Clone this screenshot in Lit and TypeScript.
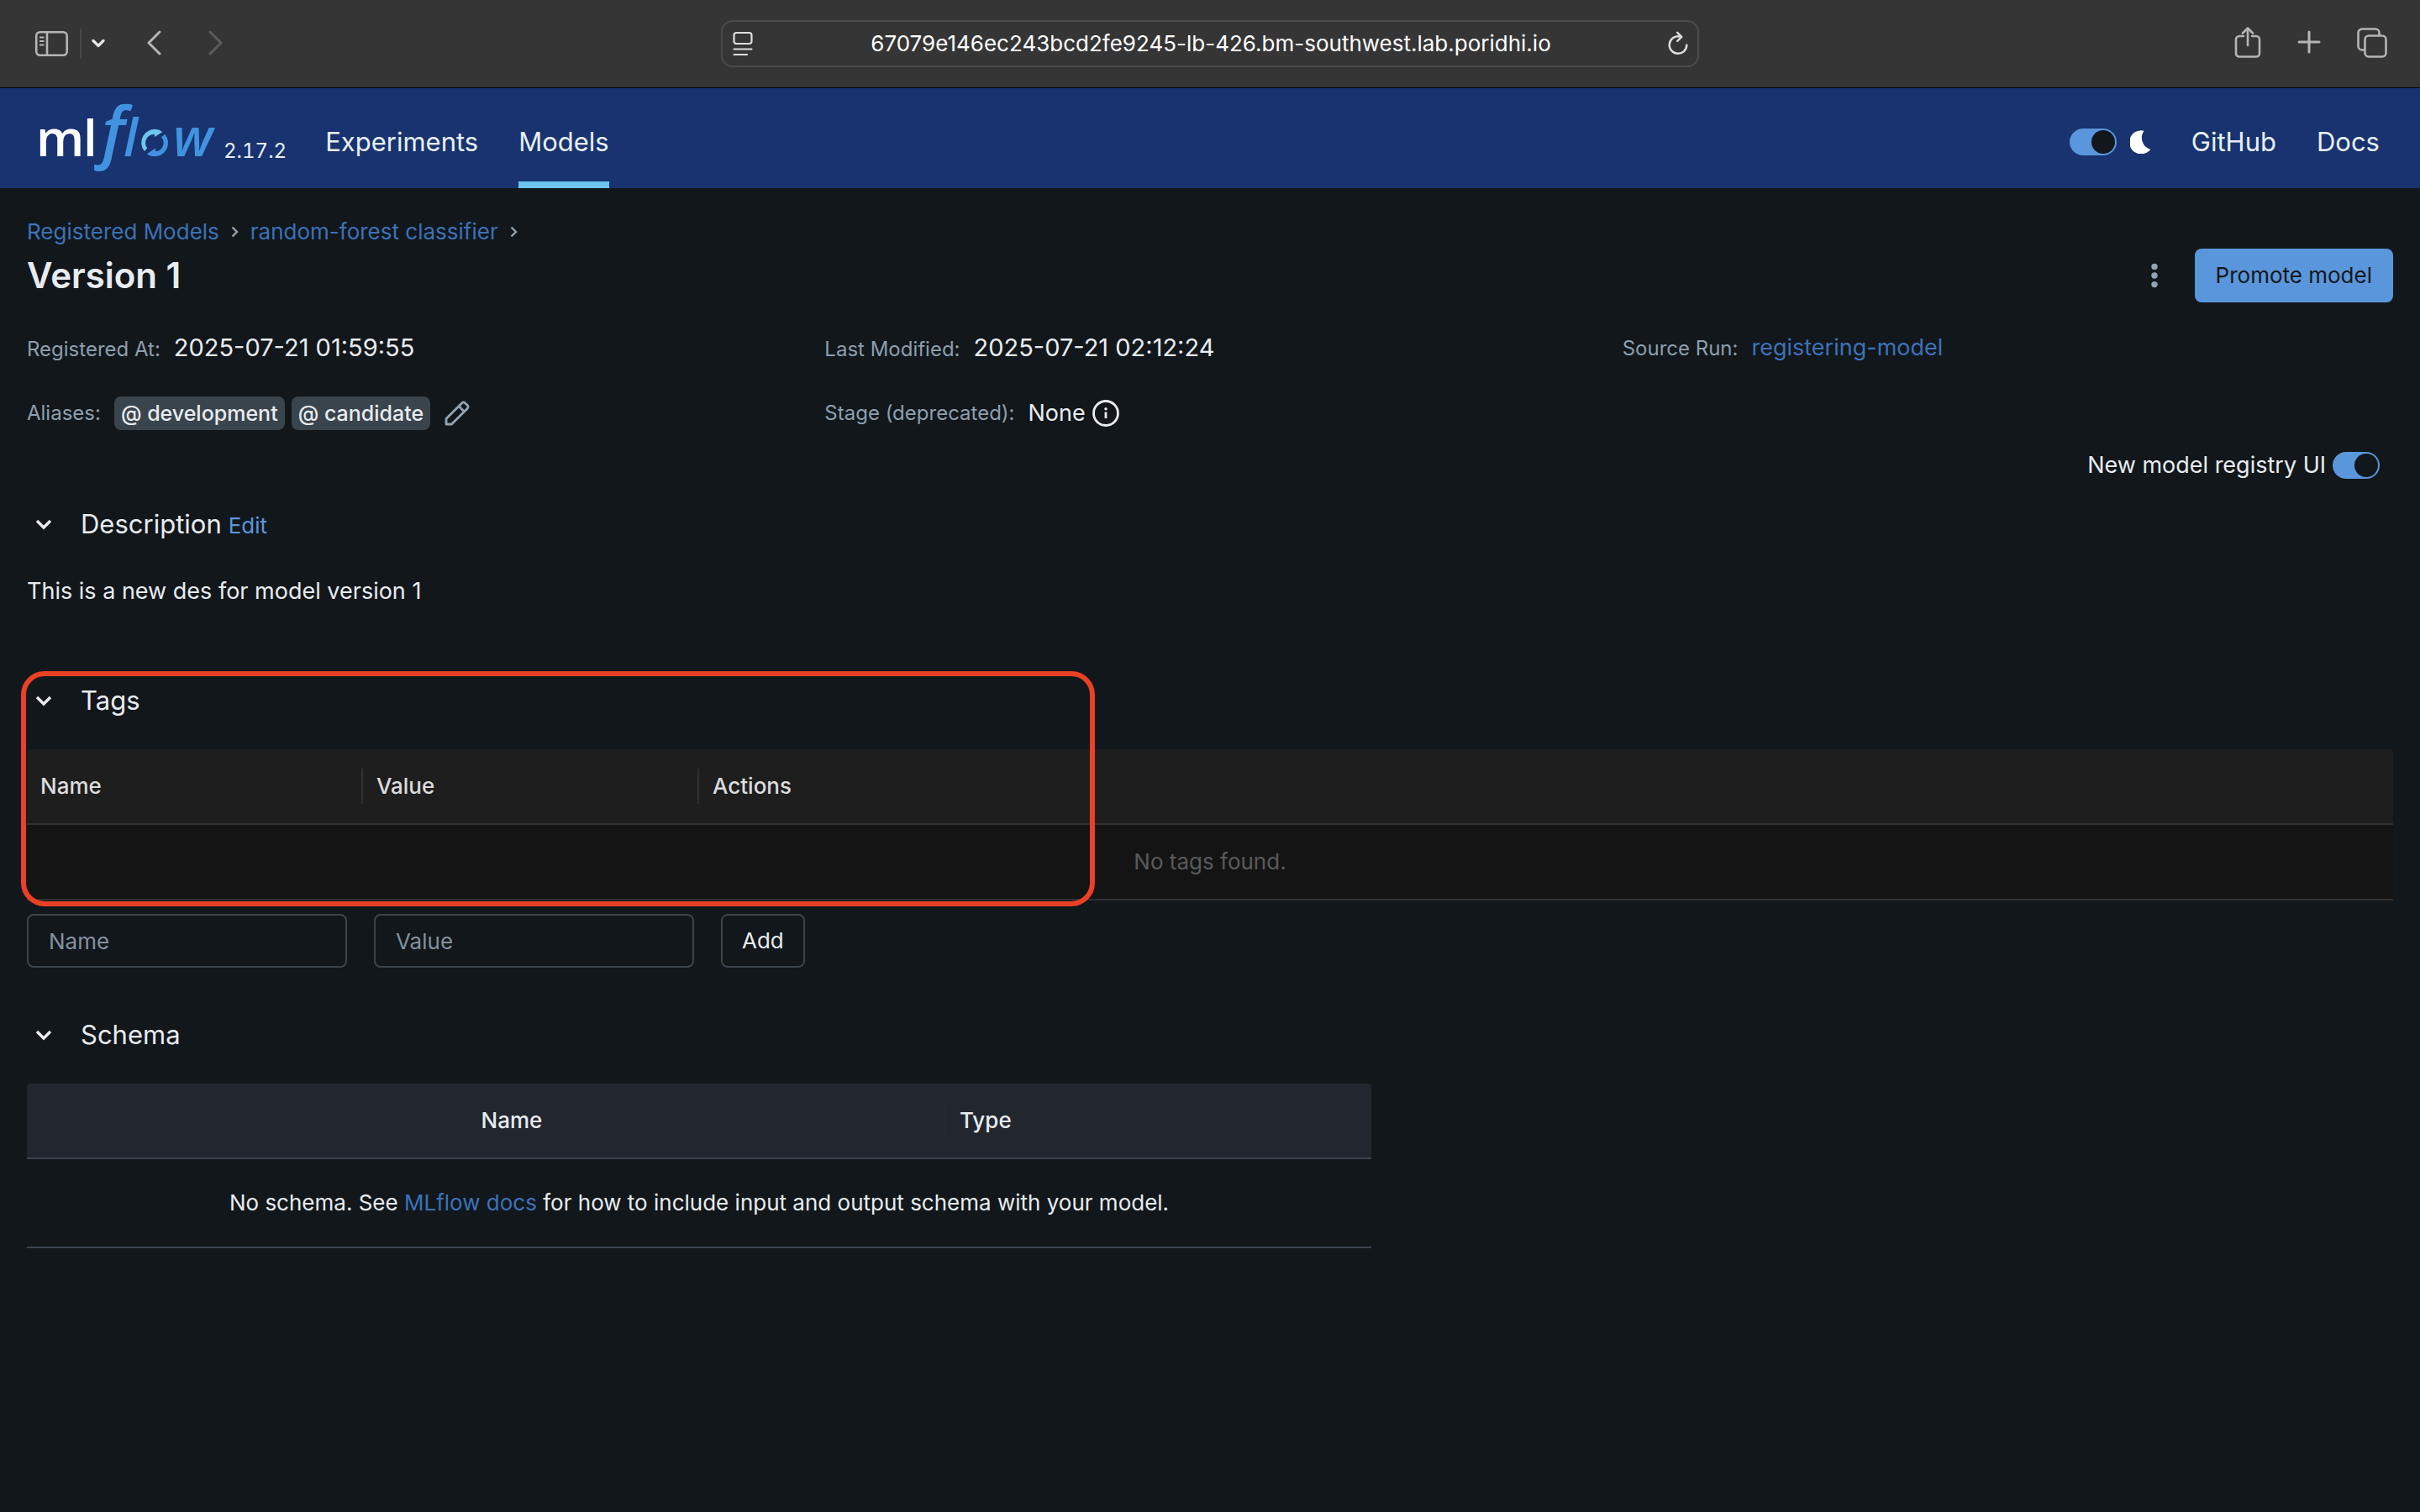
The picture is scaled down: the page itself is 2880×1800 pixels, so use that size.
import { LitElement, html, css, svg } from "lit";
import { customElement, state } from "lit/decorators.js";

const chevronDown = html`<svg class="chev" viewBox="0 0 20 14" aria-hidden="true">
  <path d="M2 3 L10 11 L18 3" fill="none" stroke="currentColor" stroke-width="3.4" />
</svg>`;

const crumbArrow = html`<svg class="crumb-arrow" viewBox="0 0 9 14" aria-hidden="true">
  <path d="M1.5 1.5 L7 7 L1.5 12.5" fill="none" stroke="currentColor" stroke-width="2.4" />
</svg>`;

const flowRing = svg`
  <path fill="#6cc7ea" d="M171.8 180 A16 16 0 0 1 186.5 154 Q190.5 154.600 193.200 157.300 L184 163 L184 160 A10.200 10.200 0 0 0 175.400 176.600 Z" />
  <path fill="#4193e0" d="M196.200 159.700 A16 16 0 0 1 182 186 Q178 185.600 174.800 183.200 L185 176.600 L185 180.200 A10.200 10.200 0 0 0 192 163.200 Z" />`;

@customElement("app-root")
export class AppRoot extends LitElement {
  @state() private darkMode = true;
  @state() private newRegistry = true;

  static styles = css`
    :host {
      display: flex;
      flex-direction: column;
      min-height: 100vh;
      background: #12171b;
      color: #e8ecf0;
      font-family: Inter, "Liberation Sans", sans-serif;
      font-size: 26px;
      line-height: 44px;
    }
    *, *::before { box-sizing: border-box; }
    a { color: #3c72b8; text-decoration: none; }
    button, input { font: inherit; color: inherit; margin: 0; }
    button { background: none; border: 0; padding: 0; cursor: pointer; }
    h1, h2, p, dl, dd { margin: 0; font-weight: 400; }
    svg { display: block; flex: none; }

    /* browser toolbar */
    .toolbar {
      display: grid;
      grid-template-columns: 1fr minmax(0, 1164px) 1fr;
      align-items: center;
      height: 105px;
      padding: 0 38px;
      background: #353535;
      border-bottom: 1px solid #000;
      color: #b5b5b5;
    }
    .tools { display: flex; align-items: center; }
    .tools.end { justify-content: flex-end; gap: 40px; }
    .sep { width: 2px; height: 36px; background: #484848; margin: 0 12px; }
    .history { display: flex; gap: 50px; margin-left: 48px; }
    .white { color: #e6e6e6; }
    .dim { color: #5c5c5c; }
    .address {
      display: flex;
      align-items: center;
      height: 56px;
      padding: 0 10px;
      border: 2px solid #4b4b4b;
      border-radius: 14px;
      color: #dedede;
    }
    .url {
      flex: 1;
      min-width: 0;
      border: 0;
      outline: 0;
      background: none;
      color: #fff;
      text-align: center;
    }

    /* application header */
    .header {
      display: flex;
      height: 119px;
      padding: 8px 48px 0 44px;
      background: #18336f;
      font-size: 31px;
    }
    .header a { color: #e8f0fb; }
    .header nav { display: flex; gap: 48px; }
    .header nav a { display: flex; align-items: center; }
    .header nav a.active { box-shadow: inset 0 -8px #6cc5ea; }
    .brand { display: flex; align-items: flex-end; gap: 8px; margin-right: 46px; padding-bottom: 16px; }
    .logo { overflow: visible; }
    .version {
      font-size: 24px;
      line-height: 28px;
      padding-bottom: 14px;
      font-variant-numeric: tabular-nums;
    }
    .theme { display: flex; align-items: center; gap: 16px; margin: 0 48px 0 auto; }

    .switch {
      appearance: none;
      display: flex;
      justify-content: flex-start;
      width: 56px;
      height: 32px;
      padding: 2px;
      border-radius: 16px;
      background: #5f6f7d;
      cursor: pointer;
    }
    .switch::before {
      content: "";
      width: 28px;
      height: 28px;
      border-radius: 50%;
      background: #12171b;
    }
    .switch:checked { justify-content: flex-end; background: #5a96db; }

    /* page */
    main { padding: 32px; }
    .crumbs { display: flex; align-items: center; gap: 14px; line-height: 40px; }
    .crumb-arrow { width: 9px; height: 14px; color: #92a4b3; }
    .title-row { display: flex; align-items: center; justify-content: space-between; height: 64px; }
    h1 { font-size: 42px; font-weight: 600; }
    .actions { display: flex; align-items: center; gap: 32px; }
    .menu { padding: 8px 12px; color: #92a4b3; }
    .primary {
      height: 64px;
      padding: 0 25px;
      border-radius: 8px;
      background: #5a96db;
      color: #12171b;
    }
    .meta {
      display: grid;
      grid-template-columns: repeat(3, minmax(0, 1fr));
      gap: 34px 32px;
      margin-top: 32px;
    }
    .meta div { display: flex; align-items: baseline; gap: 16px; height: 44px; }
    .meta .centered { align-items: center; }
    .meta dt { font-size: 24px; color: #8d9fae; }
    .meta dd { display: flex; align-items: center; gap: 8px; font-size: 27px; }
    .meta .time { font-size: 29px; }
    .alias {
      height: 40px;
      padding: 0 8px;
      border-radius: 8px;
      background: #3a444d;
      font-size: 25px;
      font-weight: 500;
      line-height: 40px;
    }
    .pencil { color: #92a4b3; margin-left: 8px; }
    .registry {
      display: flex;
      align-items: center;
      justify-content: flex-end;
      gap: 8px;
      height: 32px;
      margin-top: 24px;
      padding-right: 16px;
      font-size: 27px;
    }
    .heading { display: flex; align-items: center; margin-bottom: 36px; }
    .heading h2 { font-size: 31px; }
    .toggle { padding: 0 34px 0 10px; }
    .chev { width: 20px; height: 14px; }
    .edit { margin-left: 8px; padding-top: 4px; color: #5a96db; line-height: 40px; }
    .description { margin-top: 32px; }
    .description p { font-size: 27px; padding-bottom: 28px; }
    .tags, .schema { position: relative; margin-top: 58px; }

    table { width: 100%; border-collapse: separate; border-spacing: 0; table-layout: fixed; }
    th { height: 90px; padding: 0 16px; font-weight: 500; }
    .tag-table th {
      text-align: left;
      color: #dcdcdc;
      border-bottom: 2px solid #303030;
      background: #1e1e1e;
    }
    .tag-table th:not(:last-child) {
      background: linear-gradient(#303030, #303030) right center / 2px 42px no-repeat #1e1e1e;
    }
    .tag-table th:first-child, .schema-table th:first-child { border-top-left-radius: 4px; }
    .tag-table th:last-child, .schema-table th:last-child { border-top-right-radius: 4px; }
    .tag-table td {
      height: 90px;
      padding: 0;
      text-align: center;
      color: #5a5a5a;
      background: #141414;
      border-bottom: 2px solid #303030;
    }
    .col-tag { width: 400px; }
    .new-tag { display: flex; gap: 32px; margin-top: 16px; }
    .field, .add {
      height: 64px;
      padding: 0 24px;
      border: 2px solid #3a444d;
      border-radius: 8px;
      background: none;
    }
    .field { width: 381px; outline: 0; }
    .field::placeholder { color: #83919f; opacity: 1; }
    .add { padding: 0 23px; }
    .callout {
      position: absolute;
      left: -7px;
      top: -13px;
      width: 1278px;
      height: 280px;
      border: 6px solid #ea4025;
      border-radius: 28px;
      pointer-events: none;
    }

    .schema-table { max-width: 1600px; }
    .schema-table th {
      background: #22262e;
      border-bottom: 2px solid #3a444d;
    }
    .schema-table .name {
      padding-left: 76px;
      background: linear-gradient(#262b30, #262b30) right center / 2px 42px no-repeat #22262e;
    }
    .schema-table .type { text-align: left; }
    .schema-table td { height: 106px; padding: 0; text-align: center; border-bottom: 2px solid #3a444d; }
    .col-type { width: 506px; }
  `;

  private heading(title: string, extra: unknown = "") {
    return html`<div class="heading">
      <button class="toggle" aria-expanded="true" aria-label=${title}>${chevronDown}</button>
      <h2>${title}</h2>
      ${extra}
    </div>`;
  }

  private renderToolbar() {
    return html`<div class="toolbar">
      <div class="tools">
        <button aria-label="Sidebar">
          <svg width="45" height="34" viewBox="-2 0 45 34" fill="none" stroke="currentColor">
            <rect x="3.200" y="3.200" width="36.500" height="27.600" rx="4.500" stroke-width="2.600" />
            <path d="M16 3 V31" stroke-width="2.600" />
            <path d="M7 9.500 H12.500 M7 14 H12.500 M7 18.500 H12.500" stroke-width="2" />
          </svg>
        </button>
        <span class="sep"></span>
        <button class="white" aria-label="Tab groups">
          <svg width="16" height="12" viewBox="0 0 16 12">
            <path d="M2 2.500 L8 8.500 L14 2.500" fill="none" stroke="currentColor" stroke-width="3.200" stroke-linecap="round" stroke-linejoin="round" />
          </svg>
        </button>
        <div class="history">
          <button aria-label="Back">
            <svg width="22" height="32" viewBox="0 1 22 32">
              <path d="M17 3 L4 16 L17 29" fill="none" stroke="currentColor" stroke-width="3" stroke-linecap="round" stroke-linejoin="round" />
            </svg>
          </button>
          <button class="dim" aria-label="Forward">
            <svg width="22" height="32" viewBox="0 1 22 32">
              <path d="M5 3 L18 16 L5 29" fill="none" stroke="currentColor" stroke-width="3" stroke-linecap="round" stroke-linejoin="round" />
            </svg>
          </button>
        </div>
      </div>
      <div class="address">
        <button aria-label="Page settings">
          <svg width="28" height="30" viewBox="0 0 28 30" fill="none" stroke="currentColor" stroke-width="2.200" stroke-linecap="round">
            <rect x="3.500" y="2" width="21" height="13" rx="3" />
            <path d="M3.500 21.500 H24.500 M3.500 28 H19" />
          </svg>
        </button>
        <input class="url" aria-label="Address" value="67079e146ec243bcd2fe9245-lb-426.bm-southwest.lab.poridhi.io" />
        <button aria-label="Reload">
          <svg width="26" height="30" viewBox="0 0 26 30" fill="none" stroke="currentColor" stroke-width="2.400" stroke-linecap="round" stroke-linejoin="round">
            <path d="M15.800 6.600 A10.300 10.300 0 1 0 23.300 16.400" />
            <path d="M12.200 1.800 L17.300 6.800 L12.200 11.800" />
          </svg>
        </button>
      </div>
      <div class="tools end">
        <button aria-label="Share">
          <svg width="34" height="40" viewBox="0 2 34 40" fill="none" stroke="currentColor" stroke-width="2.600" stroke-linecap="round" stroke-linejoin="round">
            <path d="M12 13 H7 a4 4 0 0 0 -4 4 V33.500 a4 4 0 0 0 4 4 H27 a4 4 0 0 0 4 -4 V17 a4 4 0 0 0 -4 -4 H22" />
            <path d="M17 24 V3.500 M11 9.500 L17 3.500 L23 9.500" />
          </svg>
        </button>
        <button aria-label="New tab">
          <svg width="32" height="32" viewBox="0 2 32 32">
            <path d="M16 4 V28 M4 16 H28" fill="none" stroke="currentColor" stroke-width="3" stroke-linecap="round" />
          </svg>
        </button>
        <button aria-label="Tab overview">
          <svg width="38" height="38" viewBox="0 1 38 38" fill="none" stroke="currentColor" stroke-width="2.600">
            <rect x="10.500" y="10.500" width="25" height="25" rx="4.500" />
            <path d="M10.500 27.500 H7 a4.500 4.500 0 0 1 -4.500 -4.500 V7 a4.500 4.500 0 0 1 4.500 -4.500 H23 a4.500 4.500 0 0 1 4.500 4.500 V10.500" />
          </svg>
        </button>
      </div>
    </div>`;
  }

  private renderHeader() {
    return html`<header class="header">
      <a class="brand" href="#home">
        <svg class="logo" width="214" height="88" viewBox="44 120 214 88" role="img" aria-label="mlflow">
          <g font-family="Open Sans" font-size="60" font-weight="600" fill="#fff">
            <text x="43" y="186">m</text>
            <text x="99" y="186">l</text>
          </g>
          <g font-family="Open Sans" font-style="italic" font-weight="600" fill="#4193e0">
            <text x="121" y="185" font-size="80">f</text>
            <text x="147" y="186" font-size="62">l</text>
            <text x="206" y="186" font-size="63">w</text>
          </g>
          ${flowRing}
        </svg>
        <span class="version">2.17.2</span>
      </a>
      <nav>
        <a href="#experiments">Experiments</a>
        <a class="active" href="#models" aria-current="page">Models</a>
      </nav>
      <label class="theme">
        <input
          class="switch"
          type="checkbox"
          role="switch"
          aria-label="Dark mode"
          .checked=${this.darkMode}
          @change=${(e: Event) => (this.darkMode = (e.target as HTMLInputElement).checked)}
        />
        <svg width="25" height="28" viewBox="0 0 25 28" aria-hidden="true">
          <path fill="#fff" d="M16.500 0.700 A14 14 0 1 0 24.300 22.700 A14.200 14.200 0 0 1 16.500 0.700 Z" />
        </svg>
      </label>
      <nav>
        <a href="#github">GitHub</a>
        <a href="#docs">Docs</a>
      </nav>
    </header>`;
  }

  private renderMeta() {
    return html`<dl class="meta">
      <div><dt>Registered At:</dt><dd class="time">2025-07-21 01:59:55</dd></div>
      <div><dt>Last Modified:</dt><dd class="time">2025-07-21 02:12:24</dd></div>
      <div><dt>Source Run:</dt><dd><a href="#run">registering-model</a></dd></div>
      <div class="centered">
        <dt>Aliases:</dt>
        <dd>
          <span class="alias">@ development</span>
          <span class="alias">@ candidate</span>
          <button class="pencil" aria-label="Edit aliases">
            <svg width="32" height="32" viewBox="0 0 32 32" fill="none" stroke="currentColor" stroke-width="2.800" stroke-linejoin="round">
              <path d="M3 29 V22.500 L21.800 3.700 a2.600 2.600 0 0 1 3.700 0 L28.300 6.500 a2.600 2.600 0 0 1 0 3.700 L9.500 29 Z M18 7.500 L24.500 14" />
            </svg>
          </button>
        </dd>
      </div>
      <div class="centered">
        <dt>Stage (deprecated):</dt>
        <dd>
          <span>None</span>
          <svg width="32" height="32" viewBox="0 0 32 32" role="img" aria-label="Stage information">
            <circle cx="16" cy="16" r="14.500" fill="none" stroke="currentColor" stroke-width="2.800" />
            <path d="M16 14.500 V22" stroke="currentColor" stroke-width="2.800" />
            <circle cx="16" cy="10.800" r="1.700" fill="currentColor" />
          </svg>
        </dd>
      </div>
    </dl>`;
  }

  render() {
    return html`
      ${this.renderToolbar()} ${this.renderHeader()}
      <main>
        <nav class="crumbs" aria-label="Breadcrumb">
          <a href="#registered">Registered Models</a>${crumbArrow}
          <a href="#model">random-forest classifier</a>${crumbArrow}
        </nav>
        <div class="title-row">
          <h1>Version 1</h1>
          <div class="actions">
            <button class="menu" aria-label="More actions">
              <svg width="8" height="30" viewBox="0 0 8 30" fill="currentColor">
                <circle cx="4" cy="4.400" r="3.700" /><circle cx="4" cy="15" r="3.700" /><circle cx="4" cy="25.600" r="3.700" />
              </svg>
            </button>
            <button class="primary">Promote model</button>
          </div>
        </div>
        ${this.renderMeta()}
        <label class="registry">
          New model registry UI
          <input
            class="switch"
            type="checkbox"
            role="switch"
            .checked=${this.newRegistry}
            @change=${(e: Event) => (this.newRegistry = (e.target as HTMLInputElement).checked)}
          />
        </label>

        <section class="description">
          ${this.heading("Description", html`<button class="edit">Edit</button>`)}
          <p>This is a new des for model version 1</p>
        </section>

        <section class="tags">
          ${this.heading("Tags")}
          <table class="tag-table">
            <colgroup><col class="col-tag" /><col class="col-tag" /><col /></colgroup>
            <thead>
              <tr><th>Name</th><th>Value</th><th>Actions</th></tr>
            </thead>
            <tbody>
              <tr><td colspan="3">No tags found.</td></tr>
            </tbody>
          </table>
          <form class="new-tag" @submit=${(e: Event) => e.preventDefault()}>
            <input class="field" aria-label="Tag name" placeholder="Name" />
            <input class="field" aria-label="Tag value" placeholder="Value" />
            <button class="add">Add</button>
          </form>
          <div class="callout"></div>
        </section>

        <section class="schema">
          ${this.heading("Schema")}
          <table class="schema-table">
            <colgroup><col /><col class="col-type" /></colgroup>
            <thead>
              <tr><th class="name">Name</th><th class="type">Type</th></tr>
            </thead>
            <tbody>
              <tr>
                <td colspan="2">
                  No schema. See <a href="#docs">MLflow docs</a> for how to include input and output schema with your model.
                </td>
              </tr>
            </tbody>
          </table>
        </section>
      </main>
    `;
  }
}
